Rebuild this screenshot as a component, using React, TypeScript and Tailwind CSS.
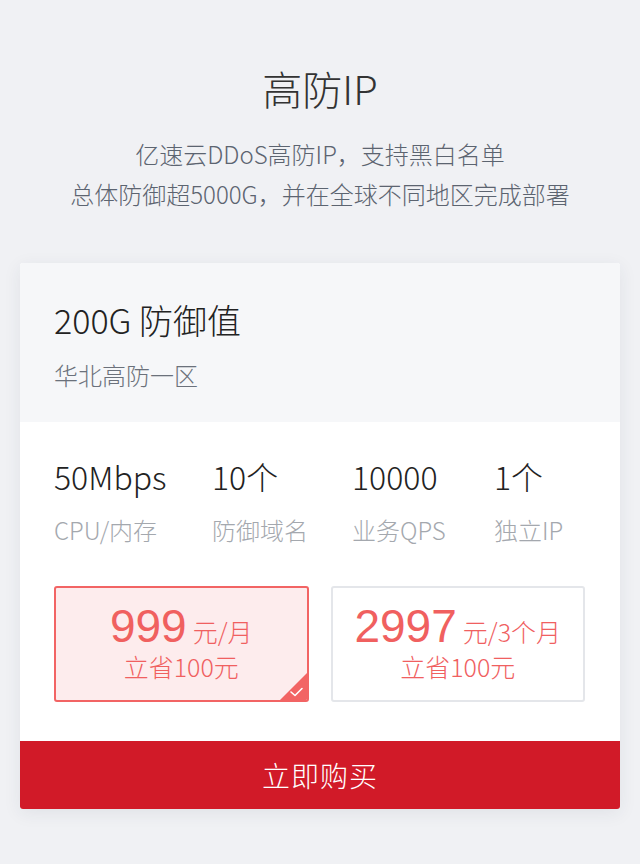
import React from 'react';

const font = { fontFamily: '"Noto Sans CJK SC", "Noto Sans", sans-serif' };

const stats = [
  { value: '50Mbps', label: 'CPU/内存' },
  { value: '10个', label: '防御域名' },
  { value: '10000', label: '业务QPS' },
  { value: '1个', label: '独立IP' },
];

function PriceBox({
  price,
  unit,
  selected,
}: {
  price: string;
  unit: string;
  selected?: boolean;
}) {
  return (
    <div
      className={
        selected
          ? 'relative flex h-[116px] flex-col items-center justify-center overflow-hidden rounded-[3px] border-2 border-[#f26464] bg-[#fdeced] pb-[6px]'
          : 'relative flex h-[116px] flex-col items-center justify-center overflow-hidden rounded-[3px] border-2 border-[#e4e6ea] bg-white pb-[6px]'
      }
    >
      <div className="flex items-baseline text-[#f0605f]">
        <span className="font-['Liberation_Sans',sans-serif] text-[46px] leading-[50px]">{price}</span>
        <span className="ml-[6px] text-[25px]">{unit}</span>
      </div>
      <div className="text-[25px] leading-[30px] text-[#f0605f]">立省100元</div>
      {selected && (
        <div className="absolute bottom-0 right-0 h-[27px] w-[27px]">
          <svg viewBox="0 0 27 27" className="h-full w-full">
            <polygon points="27,0 27,27 0,27" fill="#f26464" />
            <polyline
              points="11,19 15,22.5 22,15.5"
              fill="none"
              stroke="#ffffff"
              strokeWidth="1.6"
              strokeLinecap="round"
              strokeLinejoin="round"
            />
          </svg>
        </div>
      )}
    </div>
  );
}

export default function App() {
  return (
    <div className="min-h-[864px] w-[640px] bg-[#f0f1f4] pt-[62px] pb-[55px] font-light" style={font}>
      {/* Heading */}
      <h1 className="text-center text-[40px] leading-[52px] text-[#333333]">高防IP</h1>
      <div className="mt-[20px] text-center text-[24px] leading-[40px] text-[#5c6470]">
        <p>亿速云DDoS高防IP，支持黑白名单</p>
        <p>总体防御超5000G，并在全球不同地区完成部署</p>
      </div>

      {/* Card */}
      <div className="mx-[20px] mt-[49px] overflow-hidden rounded-[3px] bg-white shadow-[0_4px_18px_rgba(40,50,80,0.08)]">
        <div className="h-[159px] bg-[#f6f7f9] px-[34px] pt-[34px]">
          <div className="text-[34px] leading-[46px] text-[#222222]">200G 防御值</div>
          <div className="mt-[17px] text-[24px] leading-[30px] text-[#6b717b]">华北高防一区</div>
        </div>

        <div className="px-[34px] pt-[32px] pb-[39px]">
          <div className="grid grid-cols-[158px_140px_142px_1fr]">
            {stats.map((s) => (
              <div key={s.label}>
                <div className="text-[32px] leading-[44px] text-[#222222]">{s.value}</div>
                <div className="mt-[16px] text-[24px] leading-[32px] text-[#a4a8ae]">{s.label}</div>
              </div>
            ))}
          </div>

          <div className="mt-[40px] grid grid-cols-2 gap-[22px] pr-[1px]">
            <PriceBox price="999" unit="元/月" selected />
            <PriceBox price="2997" unit="元/3个月" />
          </div>
        </div>

        <button className="flex h-[68px] w-full items-center justify-center bg-[#d11a28] text-[28px] tracking-[1px] text-white">
          立即购买
        </button>
      </div>
    </div>
  );
}
